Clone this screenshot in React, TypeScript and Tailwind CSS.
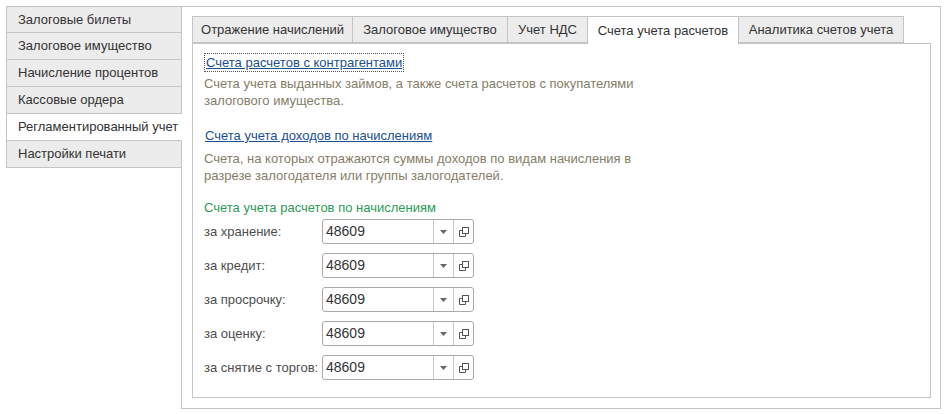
import React from "react";

const leftTabs = [
  "Залоговые билеты",
  "Залоговое имущество",
  "Начисление процентов",
  "Кассовые ордера",
  "Регламентированный учет",
  "Настройки печати",
];

const topTabs = [
  { t: "Отражение начислений", w: "w-[161px]" },
  { t: "Залоговое имущество", w: "w-[155px]" },
  { t: "Учет НДС", w: "w-[80px]" },
  { t: "Счета учета расчетов", w: "w-[151px]", active: true },
  { t: "Аналитика счетов учета", w: "w-[165px]" },
];

const rows = ["за хранение:", "за кредит:", "за просрочку:", "за оценку:", "за снятие с торгов:"];

function Field() {
  return (
    <div className="flex h-[25px] w-[152px] items-stretch rounded-[3px] border border-[#a9a9a9] bg-white">
      <div className="flex flex-1 items-center pl-[3px] text-[14px] text-[#333]">48609</div>
      <div className="flex w-[20px] items-center justify-center border-l border-[#c8c8c8]">
        <svg width="7" height="4" viewBox="0 0 7 4">
          <path d="M0 0 H7 L3.5 4 Z" fill="#666" />
        </svg>
      </div>
      <div className="flex w-[20px] items-center justify-center border-l border-[#c8c8c8]">
        <svg width="10" height="10" viewBox="0 0 10 10" fill="none" stroke="#555" strokeWidth="1">
          <rect x="3.5" y="0.5" width="6" height="6" />
          <path d="M3.5 3.5 H0.5 V9.5 H6.5 V6.5" />
        </svg>
      </div>
    </div>
  );
}

export default function App() {
  return (
    <div
      className="flex h-[414px] w-[947px] bg-white pl-[6px] pt-[6px] text-[13px] text-[#333]"
      style={{ fontFamily: '"Liberation Sans", Arial, sans-serif' }}
    >
      <div className="flex w-[176px] flex-col">
        {leftTabs.map((t, i) => {
          const active = i === 4;
          return (
            <div
              key={t}
              className={
                "relative flex h-[27px] items-center border-x border-b border-[#c4c4c4] pl-[11px] " +
                (i === 0 ? "border-t " : "") +
                (active ? "z-10 border-r-white bg-white" : "bg-[#ececec]")
              }
            >
              {t}
            </div>
          );
        })}
      </div>
      <div className="-ml-px flex h-[403px] w-[760px] flex-col border border-[#c4c4c4] bg-white pb-[10px] pl-[10px] pr-[9px] pt-[9px]">
        <div className="flex h-[27px]">
          {topTabs.map((tab, i) => (
            <div
              key={tab.t}
              className={
                "relative flex items-center justify-center border-t border-r border-[#c4c4c4] " +
                tab.w +
                " " +
                (i === 0 ? "border-l " : "") +
                (tab.active ? "z-10 -mb-px h-[28px] bg-white" : "h-[27px] border-b bg-[#ececec]")
              }
            >
              {tab.t}
            </div>
          ))}
        </div>
        <div className="flex flex-1 flex-col border border-[#c4c4c4] pl-[11px] pt-[9px] leading-[17px]">
          <div>
            <span className="inline-block border border-dotted border-[#555] px-px text-[#1b4f8f] underline">
              Счета расчетов с контрагентами
            </span>
          </div>
          <div className="mt-[3px] text-[#857d68]">
            Счета учета выданных займов, а также счета расчетов с покупателями
            <br />
            залогового имущества.
          </div>
          <div className="mt-[18px]">
            <span className="pl-px text-[#1b4f8f] underline">Счета учета доходов по начислениям</span>
          </div>
          <div className="mt-[6px] text-[#857d68]">
            Счета, на которых отражаются суммы доходов по видам начисления в
            <br />
            разрезе залогодателя или группы залогодателей.
          </div>
          <div className="mt-[15px] text-[#2e9a58]">Счета учета расчетов по начислениям</div>
          <div className="mt-[3px] flex flex-col gap-[9px]">
            {rows.map((r) => (
              <div key={r} className="flex items-center">
                <div className="w-[118px] whitespace-nowrap text-[#4d4d4d]">{r}</div>
                <Field />
              </div>
            ))}
          </div>
        </div>
      </div>
    </div>
  );
}
